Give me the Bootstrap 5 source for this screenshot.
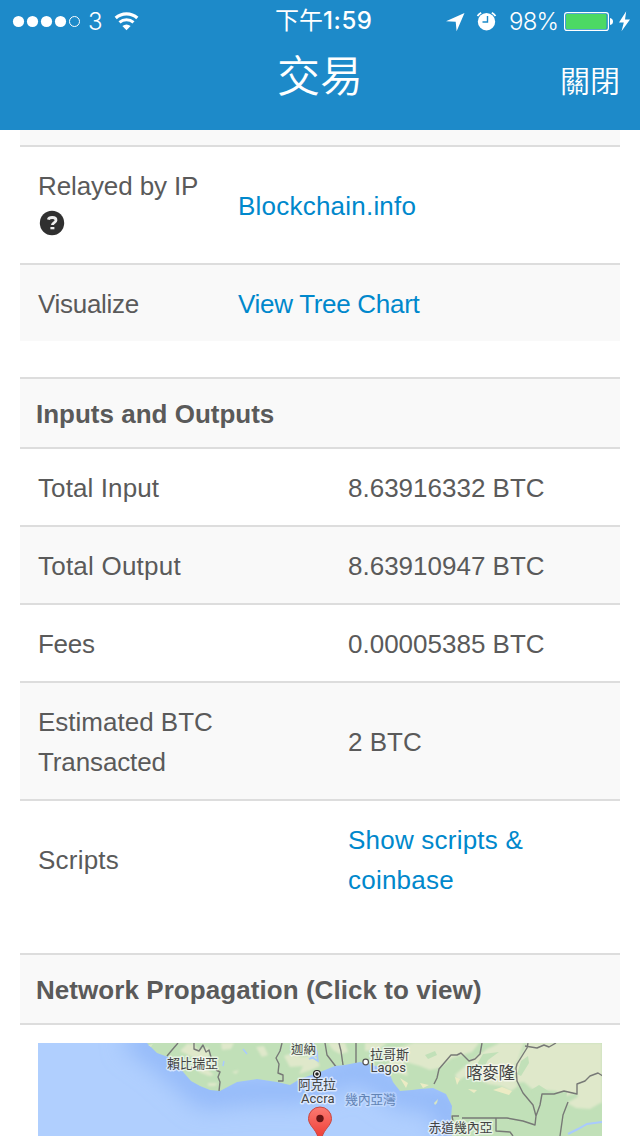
<!DOCTYPE html>
<html lang="zh-Hant">
<head>
<meta charset="utf-8">
<meta name="viewport" content="width=device-width, initial-scale=1">
<title>交易</title>
<link href="https://cdn.jsdelivr.net/npm/bootstrap@5.3.0/dist/css/bootstrap.min.css" rel="stylesheet">
<style>
  body { font-family: "Liberation Sans", "Noto Sans CJK TC", sans-serif; font-size: 26px; line-height: 40px; color: #5a5a5a; background: #fff; }
  a { color: #0088cc; }
  .app-header { height: 130px; background: #1d8ac9; color: #fff; }
  .status-bar { height: 40px; line-height: 40px; font-family: Inter, "Noto Sans CJK TC", sans-serif; font-size: 24px; display: grid; grid-template-columns: 275px 98px 1fr; }
  .status-bar svg, .tx-map, .help-icon { display: block; flex: none; }
  .carrier { font-weight: 300; margin-left: 4px; width: 26px; padding-top: 2px; }
  .clock { font-weight: 500; white-space: nowrap; letter-spacing: .6px; padding-top: 1px; }
  .clock span { font-weight: 400; letter-spacing: 0; }
  .battery-text { font-weight: 300; width: 55px; letter-spacing: -.8px; padding-top: 2px; }
  .title-bar { height: 90px; display: grid; grid-template-columns: 1fr auto 1fr; font-family: "Noto Sans CJK TC", sans-serif; }
  .title-bar h1 { grid-column: 2; font-size: 43px; font-weight: 350; line-height: 66px; }
  .title-bar a { font-size: 30px; font-weight: 350; line-height: 79px; }
  .tx-page { height: 1006px; }
  .tx-group { margin-bottom: 36px; }
  .tx-row { border-top: 2px solid #ddd; padding: 19px 18px 17px; }
  .tx-row.shade { background: #f9f9f9; }
  .tx-head { border-top: 2px solid #ddd; background: #f9f9f9; padding: 15px 16px 13px; font-size: 26px; font-weight: 700; line-height: 40px; }
  .tx-cut { height: 15px; background: #f9f9f9; }
  .tx-mapbox { border-top: 2px solid #ddd; padding: 18px; }
  .w-a { width: 200px; }
  .w-b { width: 310px; }
  .tight { letter-spacing: -.3px; }
  .snug { letter-spacing: -.12px; }
  .open { letter-spacing: .1px; }
  .loose { letter-spacing: .22px; }
  .help-icon { margin: 4px 0 10px 1px; }
  .tx-map text { font-family: Roboto, "Noto Sans CJK TC", sans-serif; paint-order: stroke; stroke: #fff; stroke-opacity: .6; stroke-width: 3px; stroke-linejoin: round; fill: #444; }
  .tx-map .sea { fill: #6284b5; stroke-opacity: .25; }
</style>
</head>
<body class="overflow-hidden">
<header class="app-header">
  <div class="status-bar">
    <div class="d-flex align-items-center">
      <svg class="ms-2" width="76" height="40" viewBox="8 0 76 40" fill="#fff"><circle cx="18.5" cy="20.5" r="5.6"/><circle cx="32.5" cy="20.5" r="5.6"/><circle cx="46.5" cy="20.5" r="5.6"/><circle cx="60.5" cy="20.5" r="5.6"/><circle cx="74.5" cy="20.5" r="5" fill="none" stroke="#fff"/></svg>
      <span class="carrier">3</span>
      <svg width="26" height="40" viewBox="114 0 26 40" fill="none" stroke="#fff"><path d="M115.7 17a16 16 0 0 1 21.600 0" stroke-width="3.2"/><path d="M119.500 21.300a10.500 10.500 0 0 1 14 0" stroke-width="3"/><path d="M122.400 25q4.100-3.200 8.200 0l-4.100 4.200z" fill="#fff" stroke="none"/></svg>
    </div>
    <div class="clock"><span>下午</span>1:59</div>
    <div class="d-flex align-items-center">
      <svg width="136" height="40" viewBox="373 0 136 40"><path d="M446 20.300 464.500 12 456.600 30.300 455.700 20.800z" fill="#fff"/><circle cx="486.500" cy="20.700" r="8.700" fill="#fff"/><path d="M477.500 15a11 11 0 0 1 3.700-3.300M491.800 11.700a11 11 0 0 1 3.700 3.300" stroke="#fff" stroke-width="1.800" fill="none"/><path d="M487.500 15v6h-5" stroke="#1d8ac9" stroke-width="1.400" fill="none"/></svg>
      <span class="battery-text">98%</span>
      <svg width="76" height="40" viewBox="564 0 76 40"><rect x="564.600" y="11.600" width="43.800" height="17.800" rx="2.500" fill="none" stroke="#fff" stroke-width="1.200"/><rect x="566" y="13" width="40.500" height="15" rx="1" fill="#4cd964"/><path d="M610 17q3 .5 3 3.500t-3 3.500z" fill="#fff"/><path d="M626.200 10.300 619 21.600h4.800L621.500 30.200 630 18.400h-5z" fill="#fff"/></svg>
    </div>
  </div>
  <div class="title-bar">
    <h1 class="m-0">交易</h1>
    <a href="#" class="text-white text-decoration-none text-end pe-3 me-1">關閉</a>
  </div>
</header>

<main class="tx-page px-1 mx-3 overflow-hidden">
  <section class="tx-group">
    <div class="tx-cut"></div>
    <div class="tx-row d-flex align-items-center">
      <div class="w-a snug">Relayed by IP
        <svg class="help-icon" width="26" height="26" viewBox="0 0 26 26"><circle cx="13" cy="13" r="12.200" fill="#303030"/><path d="M9.300 9.700q.6-2.200 3.900-2.200 3.800 0 3.800 2.800c0 2.400-3.600 2.200-3.600 4.800" fill="none" stroke="#eee" stroke-width="2.800"/><path d="M11.400 17h4v2.300h-4z" fill="#eee"/></svg>
      </div>
      <a href="#" class="text-decoration-none loose">Blockchain.info</a>
    </div>
    <div class="tx-row shade d-flex align-items-center">
      <div class="w-a tight">Visualize</div>
      <a href="#" class="text-decoration-none tight">View Tree Chart</a>
    </div>
  </section>

  <section class="tx-group">
    <h2 class="tx-head m-0">Inputs and Outputs</h2>
    <div class="tx-row d-flex align-items-center"><div class="w-b open">Total Input</div><div>8.63916332 BTC</div></div>
    <div class="tx-row shade d-flex align-items-center"><div class="w-b loose">Total Output</div><div>8.63910947 BTC</div></div>
    <div class="tx-row d-flex align-items-center"><div class="w-b tight">Fees</div><div>0.00005385 BTC</div></div>
    <div class="tx-row shade d-flex align-items-center"><div class="w-b">Estimated BTC<br><span class="snug">Transacted</span></div><div>2 BTC</div></div>
    <div class="tx-row d-flex align-items-center"><div class="w-b loose">Scripts</div><a href="#" class="text-decoration-none loose">Show scripts &amp;<br>coinbase</a></div>
  </section>

  <section>
    <h2 class="tx-head m-0" style="letter-spacing:.06px">Network Propagation (Click to view)</h2>
    <div class="tx-mapbox">
      <svg class="tx-map" width="564" height="93" viewBox="38 1043 564 93">
        <defs>
          <linearGradient id="pin" x2="0" y2="1"><stop offset="0" stop-color="#fb7b72"/><stop offset="1" stop-color="#ee3f38"/></linearGradient>
          <filter id="soft" x="-20%" y="-50%" width="140%" height="200%"><feGaussianBlur stdDeviation="12"/></filter>
          <filter id="blend" x="-20%" y="-20%" width="140%" height="140%"><feGaussianBlur stdDeviation=".8"/></filter>
          <clipPath id="land"><path d="M147 1043 157 1053 168 1057 178 1066 191 1081 200 1086 210 1090 220 1091 237 1082 257 1079 277 1082 290 1085 300 1079 320 1072 335 1066 345 1065 360 1062 376 1066 389 1072 393 1082 400 1091 412 1090 420 1089 433 1088 446 1094 452 1106 451 1118 452 1136H602V1043z"/></clipPath>
        </defs>
        <rect x="38" y="1043" width="564" height="93" fill="#b0cffe"/>
        <path d="M130 1035 165 1060 205 1095 250 1090 300 1090 360 1067 400 1095 448 1100 452 1146" fill="none" stroke="#8fb6f8" stroke-width="24" filter="url(#soft)"/>
        <path d="M147 1043 157 1053 168 1057 178 1066 191 1081 200 1086 210 1090 220 1091 237 1082 257 1079 277 1082 290 1085 300 1079 320 1072 335 1066 345 1065 360 1062 376 1066 389 1072 393 1082 400 1091 412 1090 420 1089 433 1088 446 1094 452 1106 451 1118 452 1136H602V1043z" fill="#c1e0b8"/>
        <g clip-path="url(#land)">
          <g fill="#dfe8ca" filter="url(#blend)">
            <path d="M180 1051l7-7 7 0 4 6 10-3 2 9-8 4-10-3zM198 1067l8 1 8 7-5 1-10-4zM208 1083l10 0-3 3h-7zM221 1043h13l-3 6-9 1zM232 1072l7-2-3 4zM256 1047l8-1 4 9-6 2zM284 1056l12-4 4 5 15-1 5 10-9 4-12 4 4-8-13 1zM328 1043l17 0 3 9-8 2-7-4zM365 1043h22l-9 7-13 1zM388 1050l26-7h65l-7 9-20 6-13 10-9 2-10-4-14-4-16 7z"/>
            <path d="M392 1058l12 5 4 13-10-3zM455 1075 472 1060 487 1049 500 1043h24l-6 17-8 13 8 13-7 5-10-5-13-2-12-6-12-1-6 4z"/>
            <path d="M527 1043H602v60h-20l-6-10-13 4-7-6-24-2-8-7-8 1-1-16 8-15zM567 1103l18-10 17-1v10l-12 7-14-1zM390 1087l4-2 2 4z"/>
          </g>
          <path d="M483 1054l16-2-11 8-5 9-7-3zM521 1061l7-5 1 7-8 13-4-2zM531 1090l8-5 14 9 14-3-1 13-30 0zM470 1064l8 2-8 5zM570 1110l8-1-4 8h-7zM394 1054l14-5-8 9zM425 1055l10-4 2 4-9 4z" fill="#c1e0b8"/>
          <path d="M493 1090l9-3 10 4-3 4zM468 1089l9 1-3 3zM455 1077l5 2-3 6zM400 1078l8 5-2 5zM420 1083l9 2-6 3z" fill="#ecebc4"/>
          <path d="M313 1043l4 9 1 9-5-3-4 1 8-4M243 1049l4 5M224 1061l-1 5" stroke="#a9cafe" stroke-width="1.500" fill="none"/>
          <g fill="none" stroke="#777976" stroke-width="1.400" stroke-linejoin="round">
            <path d="M178 1043l-6 7-5 6M194 1043l0 6 5 2 4-6 3 7 3-2 2 7M216 1070l4 2-2 5 2 5-1 9M282 1043l-2 8-4 7 3 6-1 9 5 2 0 6-5 0M325 1043l2 12 10 13M339 1043l2 8 2 14M356 1043v20"/>
            <path d="M482 1043l-2 11-5 5-6 2-8-8-4 2-6 0-12 14-2 9-3 6M528 1043l-1 5-10 16-1 4 1 13 6 12 10 12 3 11 4-11 2-11 12 0 10-3 13 3 0-10 8-3 5-5 8-3 13 8 7 3M568 1102l-5 13-3 21M536 1116l-1 9-12-4-16-3H462M453 1121l-1-5 7 0M496 1118v13l14 1 3 4"/>
            <path d="M525 1046l12 2 7-3 5 2 7-4"/>
          </g>
          <path d="M568 1134l10-5 9-5 15-2" stroke="#a9cafe" stroke-width="2" fill="none"/>
        </g>
        <path d="M434 1103l4-4-1 4-2 2zM148 1045l5-1-2 3z" fill="#d6e5c5"/>
        <text x="167" y="1067.500" font-size="13" textLength="51">賴比瑞亞</text>
        <text x="291" y="1054" font-size="12.500" textLength="25">迦納</text>
        <text x="370" y="1058.500" font-size="13" textLength="39">拉哥斯</text>
        <text x="370.500" y="1072" font-size="13" textLength="35.500" lengthAdjust="spacingAndGlyphs">Lagos</text>
        <text x="298" y="1089" font-size="13" textLength="38">阿克拉</text>
        <text x="301" y="1102.500" font-size="13" textLength="33.500" lengthAdjust="spacingAndGlyphs">Accra</text>
        <text class="sea" x="345" y="1103.500" font-size="13" textLength="51">幾內亞灣</text>
        <text x="466" y="1079" font-size="16.500" textLength="49">喀麥隆</text>
        <text x="428.500" y="1132" font-size="13" textLength="64">赤道幾內亞</text>
        <circle cx="365.700" cy="1062" r="2.800" fill="#fff" stroke="#555" stroke-width="1.200"/>
        <circle cx="317" cy="1074" r="3.500" fill="#fff" stroke="#222" stroke-width="1.200"/><circle cx="317" cy="1074" r="1.800" fill="#222"/>
        <path d="M308.500 1118.500a11.500 11.500 0 0 1 23 0c0 7-7 10-9.500 18.500h-4c-2.500-8.500-9.500-11.500-9.500-18.500z" fill="url(#pin)" stroke="#c94841"/>
        <circle cx="320" cy="1118.500" r="3.700" fill="#651514"/>
      </svg>
    </div>
  </section>
</main>
<script src="https://cdn.jsdelivr.net/npm/bootstrap@5.3.0/dist/js/bootstrap.bundle.min.js"></script>
</body>
</html>
